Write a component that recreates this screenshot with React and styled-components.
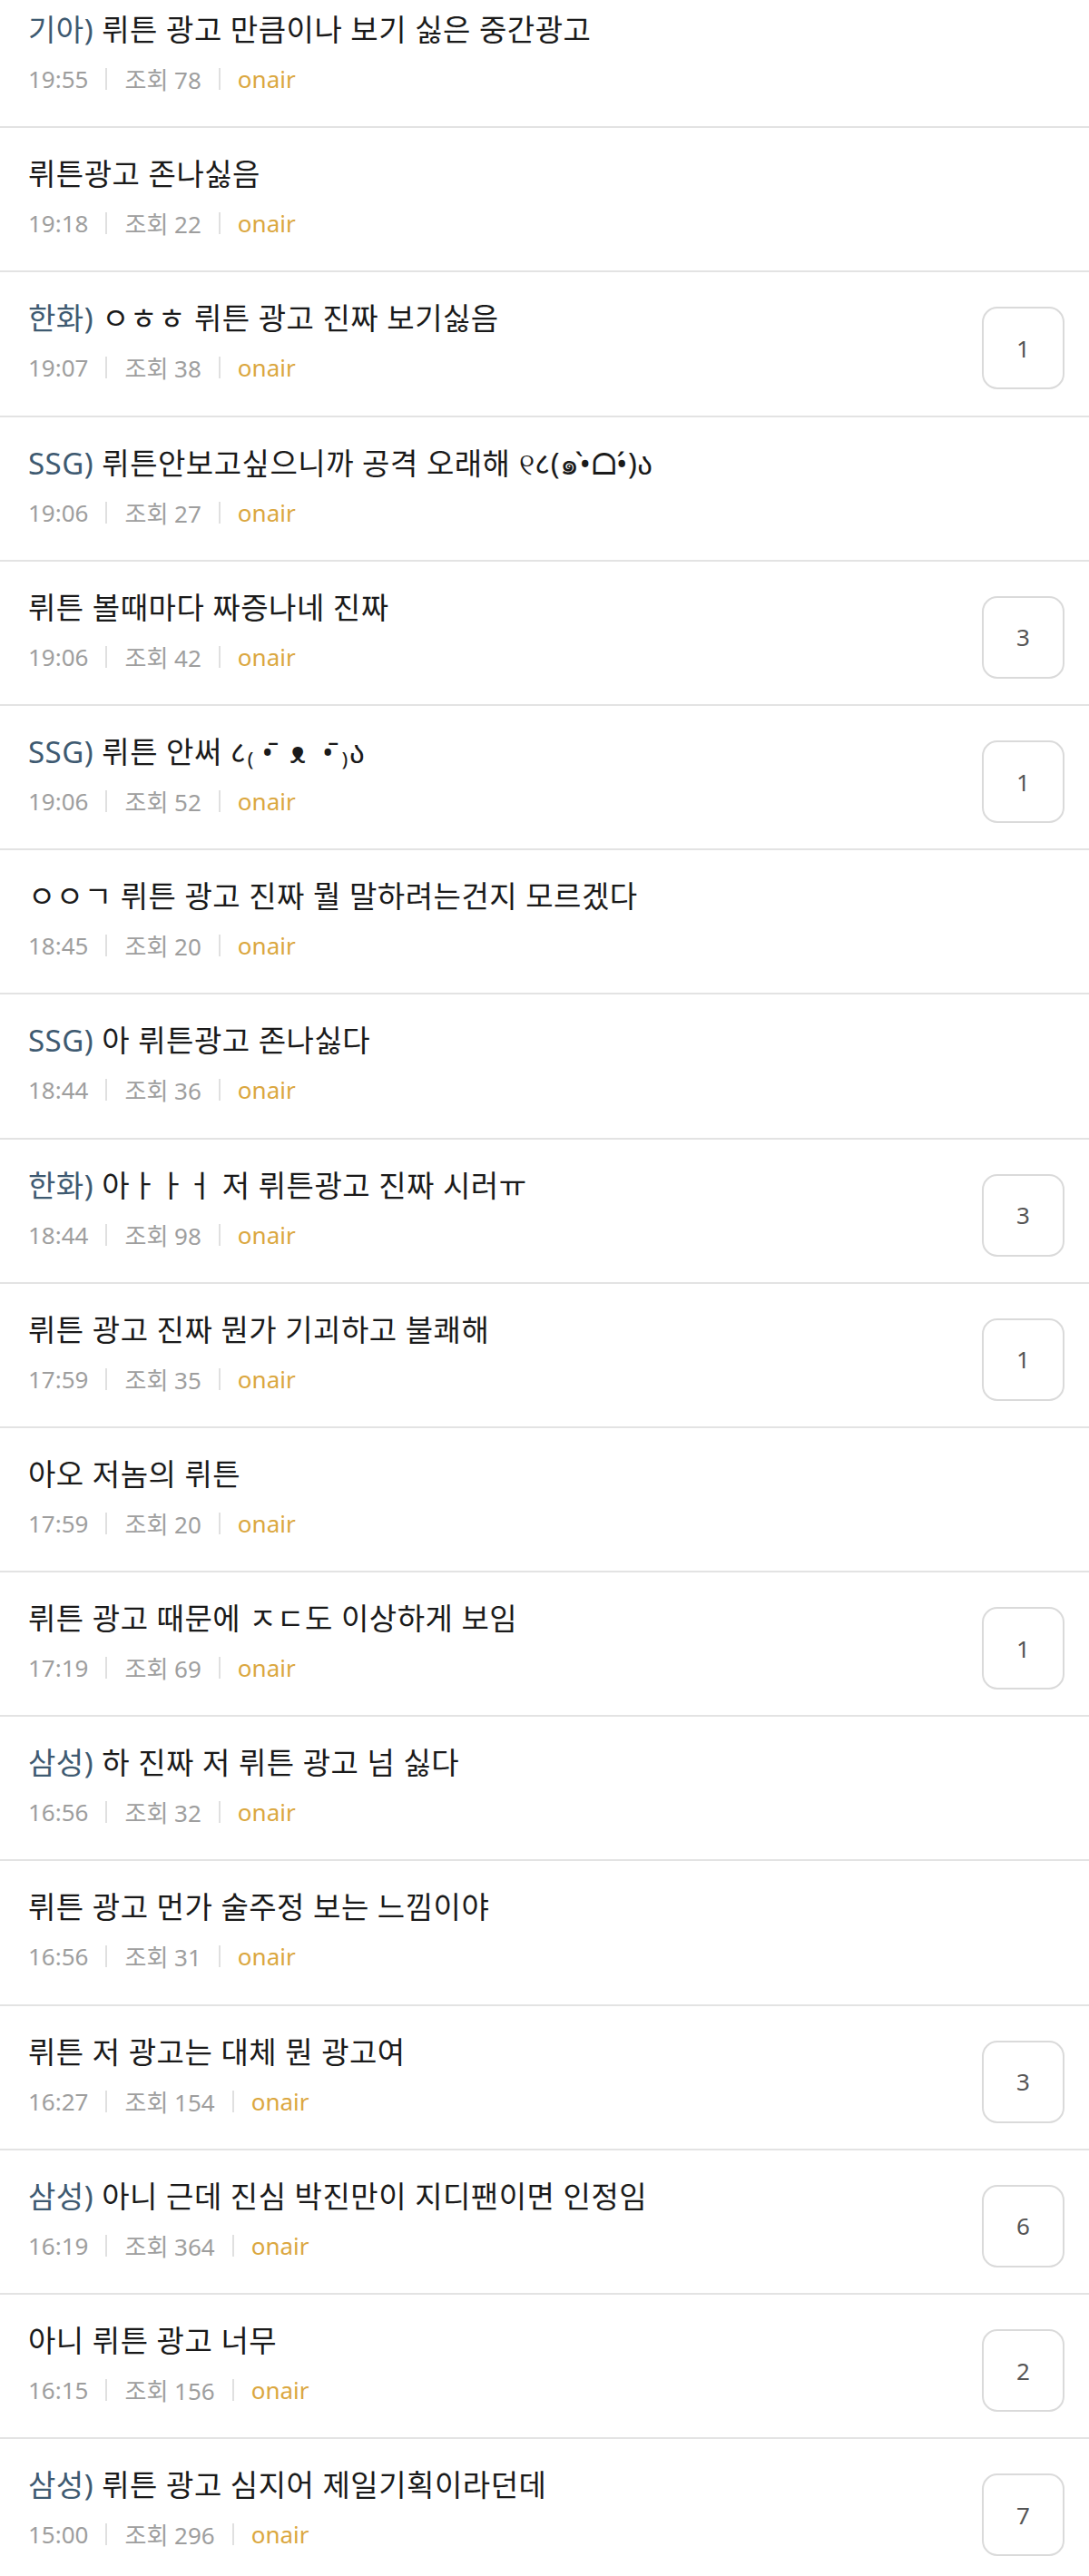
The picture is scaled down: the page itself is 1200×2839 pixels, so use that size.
import React from "react";
import styled, { createGlobalStyle } from "styled-components";

const GlobalStyle = createGlobalStyle`
  html, body {
    margin: 0;
    padding: 0;
    background: #ffffff;
  }
  body {
    font-family: "Noto Sans", "Noto Sans CJK KR", "DejaVu Sans", sans-serif;
    -webkit-font-smoothing: antialiased;
  }
`;

const posts = [
  { tag: "기아)", title: "뤼튼 광고 만큼이나 보기 싫은 중간광고", time: "19:55", views: 78 },
  { title: "뤼튼광고 존나싫음", time: "19:18", views: 22 },
  { tag: "한화)", title: "ㅇㅎㅎ 뤼튼 광고 진짜 보기싫음", time: "19:07", views: 38, replies: 1 },
  { tag: "SSG)", title: "뤼튼안보고싶으니까 공격 오래해 ୧८(๑•̀ᗝ•́)ა", time: "19:06", views: 27 },
  { title: "뤼튼 볼때마다 짜증나네 진짜", time: "19:06", views: 42, replies: 3 },
  { tag: "SSG)", title: "뤼튼 안써 ८₍\u00a0•̄\u00a0\u00a0ᴥ\u00a0\u00a0•̄\u00a0₎ა", time: "19:06", views: 52, replies: 1 },
  { title: "ㅇㅇㄱ 뤼튼 광고 진짜 뭘 말하려는건지 모르겠다", time: "18:45", views: 20 },
  { tag: "SSG)", title: "아 뤼튼광고 존나싫다", time: "18:44", views: 36 },
  { tag: "한화)", title: "아ㅏㅏㅓ 저 뤼튼광고 진짜 시러ㅠ", time: "18:44", views: 98, replies: 3 },
  { title: "뤼튼 광고 진짜 뭔가 기괴하고 불쾌해", time: "17:59", views: 35, replies: 1 },
  { title: "아오 저놈의 뤼튼", time: "17:59", views: 20 },
  { title: "뤼튼 광고 때문에 ㅈㄷ도 이상하게 보임", time: "17:19", views: 69, replies: 1 },
  { tag: "삼성)", title: "하 진짜 저 뤼튼 광고 넘 싫다", time: "16:56", views: 32 },
  { title: "뤼튼 광고 먼가 술주정 보는 느낌이야", time: "16:56", views: 31 },
  { title: "뤼튼 저 광고는 대체 뭔 광고여", time: "16:27", views: 154, replies: 3 },
  { tag: "삼성)", title: "아니 근데 진심 박진만이 지디팬이면 인정임", time: "16:19", views: 364, replies: 6 },
  { title: "아니 뤼튼 광고 너무", time: "16:15", views: 156, replies: 2 },
  { tag: "삼성)", title: "뤼튼 광고 심지어 제일기획이라던데", time: "15:00", views: 296, replies: 7 },
];

function PostRow({ post }) {
  return (
    <Row>
      <Body>
        <Title>
          {post.tag && <Tag>{post.tag} </Tag>}
          {post.title}
        </Title>
        <Meta>
          <span>{post.time}</span>
          <Divider />
          <span>조회 {post.views}</span>
          <Divider />
          <Board>onair</Board>
        </Meta>
      </Body>
      {post.replies && <ReplyBox>{post.replies}</ReplyBox>}
    </Row>
  );
}

export default function App() {
  return (
    <>
      <GlobalStyle />
      <List>
        {posts.map((post, i) => (
          <PostRow key={i} post={post} />
        ))}
      </List>
    </>
  );
}

const List = styled.ul`
  list-style: none;
  margin: -18px 0 0;
  padding: 0;
  width: 1200px;
`;

const Row = styled.li`
  display: flex;
  align-items: flex-start;
  height: 157.2px;
  box-sizing: content-box;
  padding: 0 27px 0 31px;
  border-bottom: 2px solid #e3e3e3;
`;

const Body = styled.div`
  flex: 1;
  min-width: 0;
  padding-top: 31px;
`;

const Title = styled.div`
  font-size: 33px;
  line-height: 40px;
  letter-spacing: 0.5px;
  color: #1a1a1a;
  white-space: nowrap;
`;

const Tag = styled.span`
  color: #3e5a71;
`;

const Meta = styled.div`
  display: flex;
  align-items: center;
  margin-top: 17px;
  height: 34px;
  font-size: 26px;
  color: #9e9e9e;
`;

const Divider = styled.i`
  display: block;
  width: 2px;
  height: 24px;
  margin: 0 19px;
  background: #e0e0e0;
`;

const Board = styled.span`
  color: #dba73f;
`;

const ReplyBox = styled.div`
  flex: none;
  align-self: center;
  margin-top: 10px;
  width: 87px;
  height: 87px;
  border: 2px solid #dadada;
  border-radius: 17px;
  display: flex;
  align-items: center;
  justify-content: center;
  font-size: 26px;
  color: #555555;
`;
